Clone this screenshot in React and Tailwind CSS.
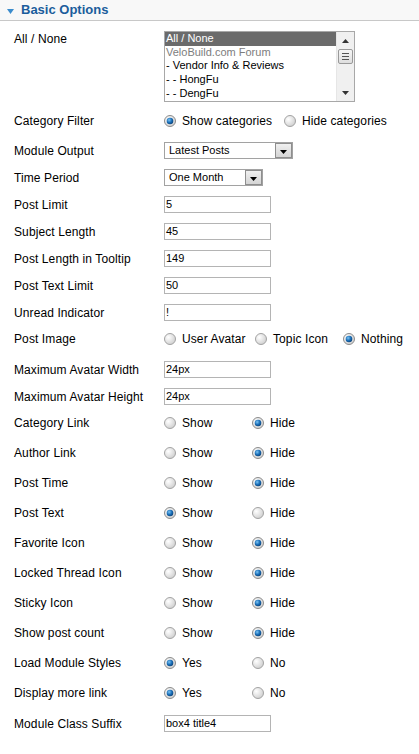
import React from "react";

const FONT = { fontFamily: '"Liberation Sans", Arial, sans-serif' };

function Radio({ on }) {
  return (
    <svg width="12" height="12" viewBox="0 0 12 12" className="shrink-0">
      <defs>
        <radialGradient id="rOff" cx="35%" cy="35%" r="70%">
          <stop offset="0%" stopColor="#ffffff" />
          <stop offset="100%" stopColor="#cfcfcf" />
        </radialGradient>
        <radialGradient id="rOn" cx="38%" cy="35%" r="70%">
          <stop offset="0%" stopColor="#7cc4f4" />
          <stop offset="55%" stopColor="#1a6fb8" />
          <stop offset="100%" stopColor="#0a3f75" />
        </radialGradient>
      </defs>
      <circle cx="6" cy="6" r="5.5" fill="url(#rOff)" stroke={on ? "#8c8c8c" : "#a3a3a3"} />
      {on && <circle cx="6" cy="6" r="3.3" fill="url(#rOn)" />}
    </svg>
  );
}

function Opt({ on, label, w }) {
  return (
    <div className={`flex items-center ${w}`}>
      <Radio on={on} />
      <span className="ml-[6px] text-[12px] tracking-[0.1px] text-black whitespace-nowrap">{label}</span>
    </div>
  );
}

function Row({ label, mt, children }) {
  return (
    <div className={`flex items-center h-[17px] ${mt}`}>
      <div className="w-[150px] text-[12px] tracking-[0.1px] text-black whitespace-nowrap">{label}</div>
      <div className="flex items-center">{children}</div>
    </div>
  );
}

function Input({ value }) {
  return (
    <div className="w-[107px] h-[17px] border border-[#b4b4b4] bg-white pl-[1px] text-[11px] leading-[15px] text-black">
      {value}
    </div>
  );
}

function Select({ value, w }) {
  return (
    <div className={`${w} h-[17px] border border-[#a2a2a2] bg-white flex items-center justify-between`}>
      <span className="pl-[4px] text-[11px] text-black">{value}</span>
      <div className="w-[17px] h-[15px] border border-[#8e8e8e] bg-gradient-to-b from-[#f0f0f0] to-[#d4d4d4] flex items-end justify-center pb-[3px]">
        <svg width="7" height="4" viewBox="0 0 7 4">
          <path d="M0 0 H7 L3.5 4 Z" fill="#000" />
        </svg>
      </div>
    </div>
  );
}

function ShowHide({ show, a = "Show", b = "Hide" }) {
  return (
    <>
      <Opt on={show} label={a} w="w-[88px]" />
      <Opt on={!show} label={b} w="" />
    </>
  );
}

function ListBox() {
  const items = [
    { t: "All / None", sel: true },
    { t: "VeloBuild.com Forum", dim: true },
    { t: "- Vendor Info & Reviews" },
    { t: "- - HongFu" },
    { t: "- - DengFu" },
  ];
  return (
    <div className="w-[191px] h-[71px] border border-[#a8a8a8] bg-white flex overflow-hidden">
      <div className="flex-1 flex flex-col">
        {items.map((it) => (
          <div
            key={it.t}
            className={`h-[13.7px] leading-[13.7px] pl-[1px] text-[11px] whitespace-nowrap ${
              it.sel ? "bg-[#6b6b6b] text-white" : it.dim ? "text-[#7d7d7d]" : "text-black"
            }`}
          >
            {it.t}
          </div>
        ))}
      </div>
      <div className="w-[18px] h-full bg-[#f0f0f0] border-l border-[#e6e6e6] flex flex-col items-center">
        <svg width="7" height="4" viewBox="0 0 7 4" className="mt-[7px]">
          <path d="M0 4 H7 L3.5 0 Z" fill="#333" />
        </svg>
        <div className="mt-[6px] w-[15px] h-[15px] border border-[#999] rounded-[2px] bg-gradient-to-b from-[#f6f6f6] to-[#dedede] flex flex-col items-center justify-center gap-[2px]">
          <div className="w-[7px] h-px bg-[#555]" />
          <div className="w-[7px] h-px bg-[#555]" />
          <div className="w-[7px] h-px bg-[#555]" />
        </div>
        <div className="flex-1" />
        <svg width="7" height="4" viewBox="0 0 7 4" className="mb-[6px]">
          <path d="M0 0 H7 L3.5 4 Z" fill="#333" />
        </svg>
      </div>
    </div>
  );
}

export default function App() {
  return (
    <div className="w-[419px] h-[754px] bg-white overflow-hidden" style={FONT}>
      <div className="h-[21px] bg-[#f8f8f8] border-b border-[#c8c8c8] flex items-center">
        <svg width="7" height="5" viewBox="0 0 7 5" className="ml-[7px] mt-[2px]">
          <path d="M0 0 H7 L3.5 5 Z" fill="#3b8ccc" />
        </svg>
        <span className="ml-[7px] text-[13px] font-bold text-[#1b5d9c]">Basic Options</span>
      </div>

      <div className="pl-[14px]">
        <div className="flex items-start mt-[10px]">
          <div className="w-[150px] pt-[1px] leading-[14px] text-[12px] tracking-[0.1px] text-black">All / None</div>
          <ListBox />
        </div>

        <Row label="Category Filter" mt="mt-[10px]">
          <Opt on label="Show categories" w="w-[120px]" />
          <Opt on={false} label="Hide categories" w="" />
        </Row>
        <Row label="Module Output" mt="mt-[13px]">
          <Select value="Latest Posts" w="w-[129px]" />
        </Row>
        <Row label="Time Period" mt="mt-[10px]">
          <Select value="One Month" w="w-[99px]" />
        </Row>
        <Row label="Post Limit" mt="mt-[10px]">
          <Input value="5" />
        </Row>
        <Row label="Subject Length" mt="mt-[10px]">
          <Input value="45" />
        </Row>
        <Row label="Post Length in Tooltip" mt="mt-[10px]">
          <Input value="149" />
        </Row>
        <Row label="Post Text Limit" mt="mt-[10px]">
          <Input value="50" />
        </Row>
        <Row label="Unread Indicator" mt="mt-[10px]">
          <Input value="!" />
        </Row>
        <Row label="Post Image" mt="mt-[9px]">
          <Opt on={false} label="User Avatar" w="w-[91px]" />
          <Opt on={false} label="Topic Icon" w="w-[88px]" />
          <Opt on label="Nothing" w="" />
        </Row>
        <Row label="Maximum Avatar Width" mt="mt-[14px]">
          <Input value="24px" />
        </Row>
        <Row label="Maximum Avatar Height" mt="mt-[10px]">
          <Input value="24px" />
        </Row>
        <Row label="Category Link" mt="mt-[9px]">
          <ShowHide show={false} />
        </Row>
        <Row label="Author Link" mt="mt-[13px]">
          <ShowHide show={false} />
        </Row>
        <Row label="Post Time" mt="mt-[13px]">
          <ShowHide show={false} />
        </Row>
        <Row label="Post Text" mt="mt-[13px]">
          <ShowHide show />
        </Row>
        <Row label="Favorite Icon" mt="mt-[13px]">
          <ShowHide show={false} />
        </Row>
        <Row label="Locked Thread Icon" mt="mt-[13px]">
          <ShowHide show={false} />
        </Row>
        <Row label="Sticky Icon" mt="mt-[13px]">
          <ShowHide show={false} />
        </Row>
        <Row label="Show post count" mt="mt-[13px]">
          <ShowHide show={false} />
        </Row>
        <Row label="Load Module Styles" mt="mt-[13px]">
          <ShowHide show a="Yes" b="No" />
        </Row>
        <Row label="Display more link" mt="mt-[13px]">
          <ShowHide show a="Yes" b="No" />
        </Row>
        <Row label="Module Class Suffix" mt="mt-[14px]">
          <Input value="box4 title4" />
        </Row>
      </div>
    </div>
  );
}
